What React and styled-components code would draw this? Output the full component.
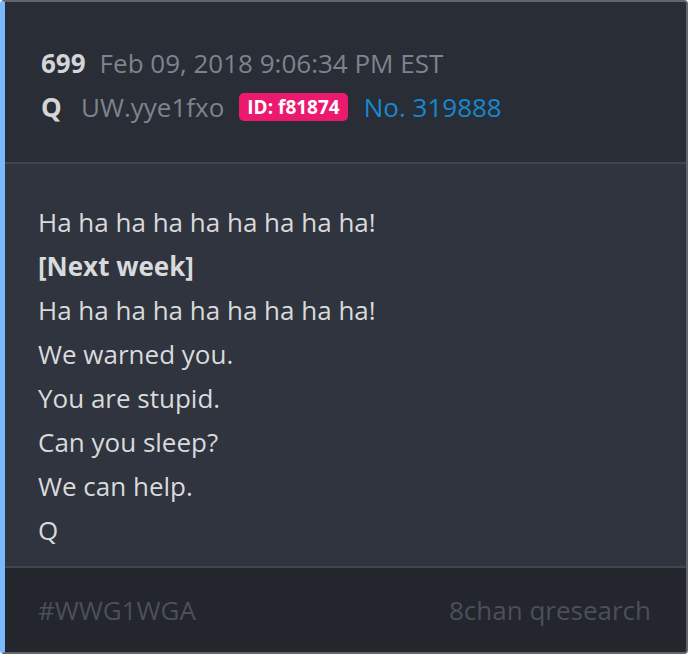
import React from 'react';
import styled, { createGlobalStyle } from 'styled-components';

const GlobalStyle = createGlobalStyle`
  html, body {
    margin: 0;
    padding: 0;
    background: #fff;
  }
  body {
    font-family: 'Open Sans', 'Noto Sans', sans-serif;
  }
`;

const post = {
  count: 699,
  date: 'Feb 09, 2018 9:06:34 PM EST',
  name: 'Q',
  trip: 'UW.yye1fxo',
  id: 'f81874',
  no: 319888,
  lines: [
    { text: 'Ha ha ha ha ha ha ha ha ha!' },
    { text: '[Next week]', bold: true },
    { text: 'Ha ha ha ha ha ha ha ha ha!' },
    { text: 'We warned you.' },
    { text: 'You are stupid.' },
    { text: 'Can you sleep?' },
    { text: 'We can help.' },
    { text: 'Q' },
  ],
  tag: '#WWG1WGA',
  source: '8chan qresearch',
};

const App = () => {
  return (
    <>
      <GlobalStyle />
      <Card>
        <Header>
          <MetaRow>
            <Strong>{ post.count }</Strong>
            <Muted>{ post.date }</Muted>
          </MetaRow>
          <MetaRow>
            <Strong>{ post.name }</Strong>
            <Muted>{ post.trip }</Muted>
            <IdBadge>ID: { post.id }</IdBadge>
            <PostNo>No. { post.no }</PostNo>
          </MetaRow>
        </Header>
        <Body>
          { post.lines.map((l, i) => (
            <Line key={ i } $bold={ l.bold }>{ l.text }</Line>
          )) }
        </Body>
        <Footer>
          <FooterText>{ post.tag }</FooterText>
          <FooterText>{ post.source }</FooterText>
        </Footer>
      </Card>
    </>
  );
};

const Card = styled.article`
  box-sizing: border-box;
  width: 688px;
  height: 654px;
  display: flex;
  flex-direction: column;
  border: 2px solid #60646d;
  border-left: 5px solid #7ab8ff;
  border-radius: 4px;
  overflow: hidden;
  background: #2f343e;
`;

const Header = styled.header`
  background: #292d35;
  padding: 39px 36px 33px;
  border-bottom: 2px solid #40454f;
`;

const MetaRow = styled.div`
  display: flex;
  align-items: center;
  gap: 14px;
  height: 44px;
  font-size: 26px;
`;

const Strong = styled.span`
  font-weight: 700;
  color: #d4d5d8;
  min-width: 26px;
`;

const Muted = styled.span`
  color: #7f838e;
`;

const IdBadge = styled.span`
  background: #ec1a6f;
  color: #fff;
  font-weight: 700;
  font-size: 19px;
  line-height: 24px;
  padding: 2px 8px;
  border-radius: 5px;
  margin-left: 1px;
`;

const PostNo = styled.span`
  color: #1788cf;
  margin-left: 2px;
`;

const Body = styled.section`
  flex: 1;
  background: #2f343e;
  padding: 36px 33px 0;
  border-bottom: 2px solid #40454f;
`;

const Line = styled.p`
  margin: 0;
  font-size: 26px;
  line-height: 44px;
  color: #d9dadc;
  font-weight: ${ p => p.$bold ? 700 : 400 };
`;

const Footer = styled.footer`
  height: 84px;
  background: #23262d;
  display: flex;
  align-items: center;
  justify-content: space-between;
  padding: 0 35px 0 33px;
`;

const FooterText = styled.span`
  font-size: 26px;
  color: #4b505a;
`;

export default App;
